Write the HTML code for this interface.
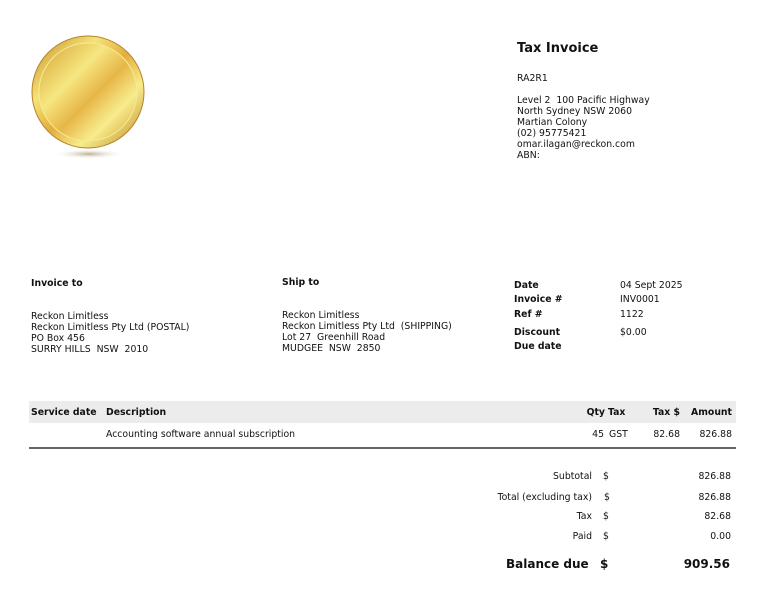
<!DOCTYPE html>
<html><head><meta charset="utf-8"><style>
*{margin:0;padding:0;box-sizing:border-box}
body{width:764px;height:596px;background:#fff;font-family:"DejaVu Sans","Liberation Sans",sans-serif;font-size:9.3px;color:#111;position:relative;overflow:hidden}
.a{position:absolute;white-space:nowrap;line-height:11px}
b{font-weight:bold}
.r{text-align:right}
.big{font-size:12px;font-weight:bold;line-height:16px}
</style></head><body>
<svg class="a" style="left:28px;top:25px" width="120" height="135" viewBox="0 0 120 135">
<defs>
<linearGradient id="g" x1="0" y1="0" x2="1" y2="1">
<stop offset="0" stop-color="#c08a1e"/><stop offset=".3" stop-color="#f5e37a"/><stop offset=".5" stop-color="#e2ad3c"/><stop offset=".7" stop-color="#f7ec8c"/><stop offset="1" stop-color="#bb8624"/></linearGradient>
<linearGradient id="g2" x1="0" y1="0" x2="1" y2="1">
<stop offset="0" stop-color="#d3a232"/><stop offset=".35" stop-color="#f6e680"/><stop offset=".55" stop-color="#e6b648"/><stop offset=".75" stop-color="#f8ec8e"/><stop offset="1" stop-color="#cf9c30"/></linearGradient>
<radialGradient id="s"><stop offset="0" stop-color="#a89a78" stop-opacity=".8"/><stop offset="1" stop-color="#fff" stop-opacity="0"/></radialGradient>
</defs>
<ellipse cx="61" cy="129" rx="36" ry="5" fill="url(#s)"/>
<circle cx="60" cy="67" r="56" fill="url(#g)" stroke="#b8832a" stroke-width="1"/>
<circle cx="60" cy="67" r="49" fill="url(#g2)" stroke="#f7ea94" stroke-width="1"/>
</svg>
<div class="a big" style="left:517px;top:41px;font-size:13px">Tax Invoice</div>
<div class="a" style="left:517px;top:73px">RA2R1</div>
<div class="a" style="left:517px;top:95px">Level 2&nbsp; 100 Pacific Highway<br>North Sydney NSW 2060<br>Martian Colony<br>(02) 95775421<br>omar.ilagan@reckon.com<br>ABN:</div>
<div class="a" style="left:31px;top:278px"><b>Invoice to</b></div>
<div class="a" style="left:31px;top:311px">Reckon Limitless<br>Reckon Limitless Pty Ltd (POSTAL)<br>PO Box 456<br>SURRY HILLS&nbsp; NSW&nbsp; 2010</div>
<div class="a" style="left:282px;top:277px"><b>Ship to</b></div>
<div class="a" style="left:282px;top:310px">Reckon Limitless<br>Reckon Limitless Pty Ltd&nbsp; (SHIPPING)<br>Lot 27&nbsp; Greenhill Road<br>MUDGEE&nbsp; NSW&nbsp; 2850</div>
<div class="a" style="left:514px;top:280px"><b>Date</b></div>
<div class="a" style="left:514px;top:294px"><b>Invoice #</b></div>
<div class="a" style="left:514px;top:309px"><b>Ref #</b></div>
<div class="a" style="left:514px;top:327px"><b>Discount</b></div>
<div class="a" style="left:514px;top:341px"><b>Due date</b></div>
<div class="a" style="left:620px;top:280px">04 Sept 2025</div>
<div class="a" style="left:620px;top:294px">INV0001</div>
<div class="a" style="left:620px;top:309px">1122</div>
<div class="a" style="left:620px;top:327px">$0.00</div>
<div class="a" style="left:29px;top:401px;width:707px;height:22px;background:#ececec"></div>
<div class="a" style="left:31px;top:407px"><b>Service date</b></div>
<div class="a" style="left:106px;top:407px"><b>Description</b></div>
<div class="a r" style="left:560px;top:407px;width:45px"><b>Qty</b></div>
<div class="a" style="left:608px;top:407px"><b>Tax</b></div>
<div class="a r" style="left:630px;top:407px;width:50px"><b>Tax $</b></div>
<div class="a r" style="left:680px;top:407px;width:52px"><b>Amount</b></div>
<div class="a" style="left:106px;top:429px">Accounting software annual subscription</div>
<div class="a r" style="left:560px;top:429px;width:44px">45</div>
<div class="a" style="left:609px;top:429px">GST</div>
<div class="a r" style="left:630px;top:429px;width:50px">82.68</div>
<div class="a r" style="left:680px;top:429px;width:52px">826.88</div>
<div class="a" style="left:29px;top:447px;width:707px;height:2px;background:#666"></div>
<div class="a r" style="left:450px;top:471px;width:142px">Subtotal</div>
<div class="a r" style="left:450px;top:492px;width:142px">Total (excluding tax)</div>
<div class="a r" style="left:450px;top:511px;width:142px">Tax</div>
<div class="a r" style="left:450px;top:531px;width:142px">Paid</div>
<div class="a" style="left:603px;top:471px">$</div>
<div class="a" style="left:604px;top:492px">$</div>
<div class="a" style="left:603px;top:511px">$</div>
<div class="a" style="left:603px;top:531px">$</div>
<div class="a r" style="left:630px;top:471px;width:101px">826.88</div>
<div class="a r" style="left:630px;top:492px;width:101px">826.88</div>
<div class="a r" style="left:630px;top:511px;width:101px">82.68</div>
<div class="a r" style="left:630px;top:531px;width:101px">0.00</div>
<div class="a big" style="left:506px;top:556px">Balance due</div>
<div class="a big" style="left:600px;top:556px">$</div>
<div class="a r big" style="left:630px;top:556px;width:100px">909.56</div>
</body></html>
